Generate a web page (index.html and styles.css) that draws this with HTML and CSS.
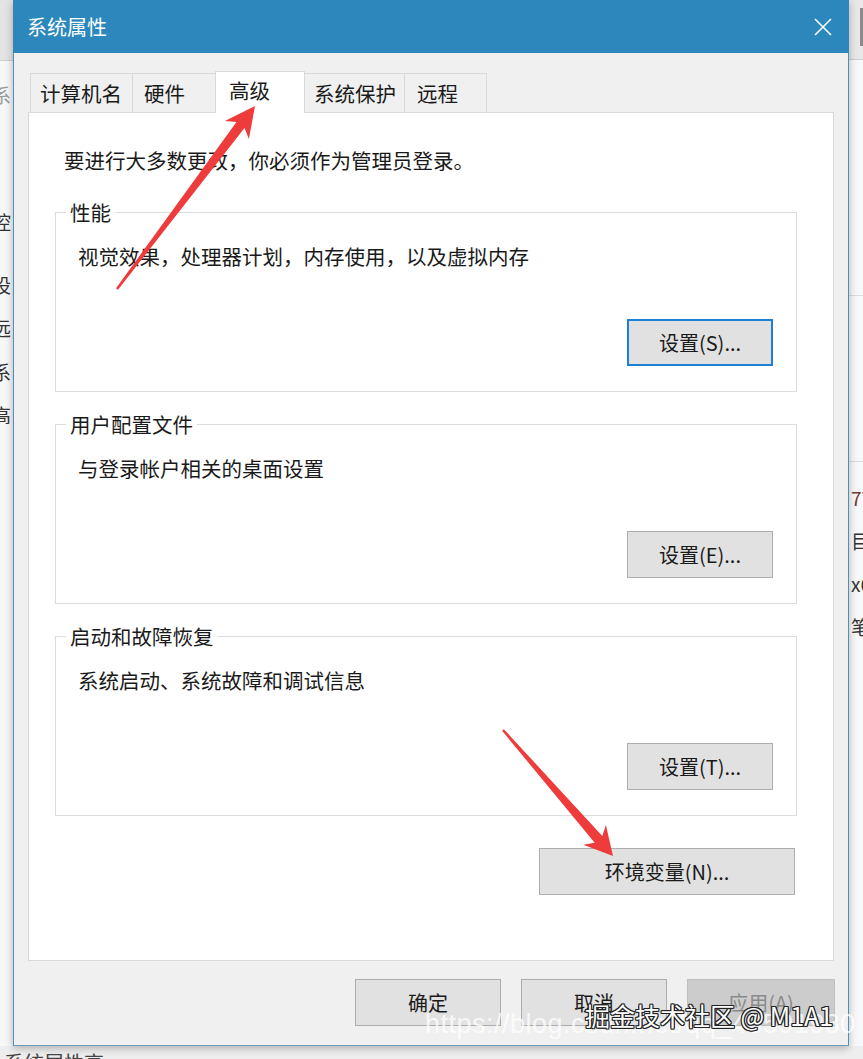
FILE: index.html
```html
<!DOCTYPE html>
<html lang="zh-CN">
<head>
<meta charset="utf-8">
<title>系统属性</title>
<link rel="stylesheet" href="styles.css">
</head>
<body>
<div class="screen">
  <div class="bg-left">
    <div class="bg-left-head"></div>
    <div class="bg-left-list">
      <span class="g g1 faint">系</span>
      <span class="g g2">控</span>
      <span class="g g3">设</span>
      <span class="g g4">远</span>
      <span class="g g5">系</span>
      <span class="g g6">高</span>
    </div>
  </div>

  <div class="dialog">
    <div class="titlebar">
      <span class="title">系统属性</span>
      <svg class="close" width="18" height="18" viewBox="0 0 18 18"><path d="M1 1 L17 17 M17 1 L1 17" stroke="#fff" stroke-width="1.6" fill="none"/></svg>
    </div>
    <div class="body">
      <div class="tabs">
        <div class="tab w-name">计算机名</div>
        <div class="tab w-hw">硬件</div>
        <div class="tab tab-active">高级</div>
        <div class="tab w-prot">系统保护</div>
        <div class="tab w-remote">远程</div>
      </div>
      <div class="panel">
        <p class="intro">要进行大多数更改，你必须作为管理员登录。</p>
        <div class="group">
          <span class="legend">性能</span>
          <p class="desc">视觉效果，处理器计划，内存使用，以及虚拟内存</p>
          <div class="group-foot"><button class="btn btn-focus">设置(S)...</button></div>
        </div>
        <div class="group">
          <span class="legend">用户配置文件</span>
          <p class="desc">与登录帐户相关的桌面设置</p>
          <div class="group-foot"><button class="btn">设置(E)...</button></div>
        </div>
        <div class="group">
          <span class="legend">启动和故障恢复</span>
          <p class="desc">系统启动、系统故障和调试信息</p>
          <div class="group-foot"><button class="btn">设置(T)...</button></div>
        </div>
        <div class="env-row"><button class="btn btn-env">环境变量(N)...</button></div>
      </div>
      <div class="actions">
        <button class="btn">确定</button>
        <button class="btn">取消</button>
        <button class="btn btn-disabled">应用(A)</button>
      </div>
    </div>
  </div>

  <div class="bg-right">
    <div class="bg-right-head"><span class="scroll"></span></div>
    <div class="bg-right-sec s1"></div>
    <div class="bg-right-sec s2"></div>
    <div class="bg-right-list">
      <span class="r r1">77</span>
      <span class="r">目)</span>
      <span class="r">x6</span>
      <span class="r">笔</span>
    </div>
  </div>

  <div class="bg-bottom"><span class="bottom-text">系统属性高</span></div>

  <svg class="arrows" width="863" height="1059" viewBox="0 0 863 1059">
    <polygon fill="#ee3b3b" points="116,288.3 236.5,122.1 224.9,120.9 255,106 248.9,138.9 244.5,128.1 118,289.7"/>
    <polygon fill="#ee3b3b" points="503.9,729.2 602.3,836.1 605.9,825.0 613,856 583.3,844.8 594.7,842.7 502.1,730.8"/>
  </svg>

  <div class="wm-url">https://blog.csdn.net/qq_43591930</div>
  <div class="watermark">掘金技术社区 @ M1A1</div>
</div>
</body>
</html>
```

FILE: styles.css
```css
* { box-sizing: border-box; }
html, body { margin: 0; padding: 0; }
body {
  font-family: "Noto Sans CJK SC", "Noto Sans", sans-serif;
  color: #1a1a1a;
  background: #f0f0f0;
}
.screen {
  position: relative;
  width: 863px;
  height: 1059px;
  overflow: hidden;
  display: grid;
  grid-template-columns: 13px 836px 14px;
  grid-template-rows: 1046px 13px;
  background: #f2f2f2;
}

/* background window, left */
.bg-left {
  grid-column: 1; grid-row: 1;
  background: #f7f7f7;
  overflow: hidden;
  display: flex;
  flex-direction: column;
}
.bg-left-head { height: 61px; background: #e4e4e4; border-bottom: 1px solid #cfcfcf; flex: none; }
.bg-left-list { display: flex; flex-direction: column; }
.g {
  display: block;
  font-size: 19px;
  line-height: 24px;
  height: 24px;
  margin-left: -8px;
  color: #333;
  white-space: nowrap;
}
.g.faint { color: #9a9a9a; }
.g1 { margin-top: 22px; }
.g2 { margin-top: 103px; }
.g3 { margin-top: 39px; }
.g4 { margin-top: 19px; }
.g5 { margin-top: 20px; }
.g6 { margin-top: 19px; }

/* background window, right */
.bg-right {
  grid-column: 3; grid-row: 1;
  background: #f8f8f8;
  overflow: hidden;
  display: flex;
  flex-direction: column;
}
.bg-right-head { height: 60px; background: #e8e8e8; border-bottom: 1px solid #cfcfcf; position: relative; flex: none; }
.scroll { position: absolute; right: 0; top: 8px; width: 3px; height: 38px; background: #8a8a8a; }
.bg-right-sec { flex: none; border-bottom: 1px solid #dcdcdc; }
.s1 { height: 236px; }
.s2 { height: 166px; }
.bg-right-list { display: flex; flex-direction: column; gap: 19px; padding-top: 24px; padding-left: 2px; }
.r { font-size: 19px; line-height: 24px; color: #333; white-space: nowrap; }
.r1 { color: #6a3a3a; }

/* background bottom */
.bg-bottom {
  grid-column: 1 / 4; grid-row: 2;
  background: #eeeeee;
  overflow: hidden;
  padding-left: 4px;
}
.bottom-text { display: block; font-size: 20px; line-height: 20px; padding-top: 7px; color: #444; }

/* dialog */
.dialog {
  grid-column: 2; grid-row: 1;
  background: #f0f0f0;
  border-left: 1px solid #4d8fbd;
  border-right: 1px solid #4d8fbd;
  border-bottom: 1px solid #6f9cba;
  box-shadow: 0 2px 8px rgba(0,0,0,0.28);
  display: flex;
  flex-direction: column;
  position: relative;
  z-index: 1;
}
.titlebar {
  height: 53px;
  background: #2b87bc;
  display: flex;
  align-items: center;
  justify-content: space-between;
  padding: 0 17px 0 14px;
  margin: 0 -1px;
  flex: none;
}
.title { color: #fff; font-size: 20px; line-height: 28px; }
.close { display: block; }

.body {
  padding: 18px 13px 19px 14px;
  display: flex;
  flex-direction: column;
}

.tabs {
  display: flex;
  align-items: flex-end;
  height: 42px;
  margin-bottom: -1px;
  padding-left: 2px;
  position: relative;
  z-index: 2;
}
.tab {
  height: 39px;
  margin-bottom: 1px;
  border: 1px solid #d9d9d9;
  border-bottom: none;
  background: #f0f0f0;
  font-size: 20.5px;
  line-height: 38px;
  padding-left: 9px;
  margin-left: -1px;
  white-space: nowrap;
}
.tab:first-child { margin-left: 0; }
.w-name { width: 103px; }
.w-hw { width: 84px; padding-left: 11px; }
.w-prot { width: 101px; }
.w-remote { width: 83px; padding-left: 12px; }
.tab-active {
  width: 90px;
  height: 42px;
  margin-bottom: 0;
  background: #fff;
  padding-left: 13px;
  line-height: 36px;
}

.panel {
  background: #fff;
  border: 1px solid #d9d9d9;
  margin-right: 1px;
  height: 849px;
  padding: 33px 36px 0 0;
  display: flex;
  flex-direction: column;
}
.intro {
  margin: 0 0 38px 35px;
  font-size: 20.5px;
  line-height: 28px;
}
.group {
  position: relative;
  margin-left: 26px;
  border: 1px solid #dcdcdc;
  height: 180px;
  margin-bottom: 32px;
  padding: 29px 23px 0 22px;
}
.legend {
  position: absolute;
  left: 10px;
  top: -15px;
  background: #fff;
  padding: 0 4px;
  font-size: 20.5px;
  line-height: 28px;
}
.desc {
  margin: 0;
  font-size: 20.5px;
  line-height: 28px;
}
.group-foot {
  display: flex;
  justify-content: flex-end;
  margin-top: 49px;
}
.btn {
  font-family: "Noto Sans CJK SC", "Noto Sans", sans-serif;
  font-size: 20px;
  color: #1a1a1a;
  width: 146px;
  height: 47px;
  background: #e1e1e1;
  border: 1px solid #adadad;
  padding: 0;
  margin: 0;
  line-height: 44px;
}
.btn-focus { border: 2px solid #1f7fd6; }
.env-row { display: flex; justify-content: flex-end; margin-right: 2px; }
.btn-env { width: 256px; }
.btn-disabled { width: 148px; background: #cccccc; border-color: #bfbfbf; color: #8a8a8a; }

.actions {
  display: flex;
  justify-content: flex-end;
  gap: 20px;
  margin-top: 18px;
}

/* overlays */
.arrows { position: absolute; left: 0; top: 0; pointer-events: none; z-index: 5; }
.watermark {
  position: absolute;
  left: 585px;
  top: 998px;
  z-index: 6;
  font-size: 25px;
  line-height: 34px;
  color: #fff;
  white-space: nowrap;
  text-shadow: -1px -1px 0 #222, 1px -1px 0 #222, -1px 1px 0 #222, 1px 1px 0 #222, 0 1px 0 #222, 1px 0 0 #222, 0 -1px 0 #222, -1px 0 0 #222;
}
.wm-url {
  position: absolute;
  left: 425px;
  top: 1008px;
  z-index: 4;
  font-family: "Liberation Sans", Arial, sans-serif;
  font-size: 27px;
  line-height: 32px;
  color: rgba(255,255,255,0.75);
  white-space: nowrap;
  letter-spacing: 0.5px;
}
```
